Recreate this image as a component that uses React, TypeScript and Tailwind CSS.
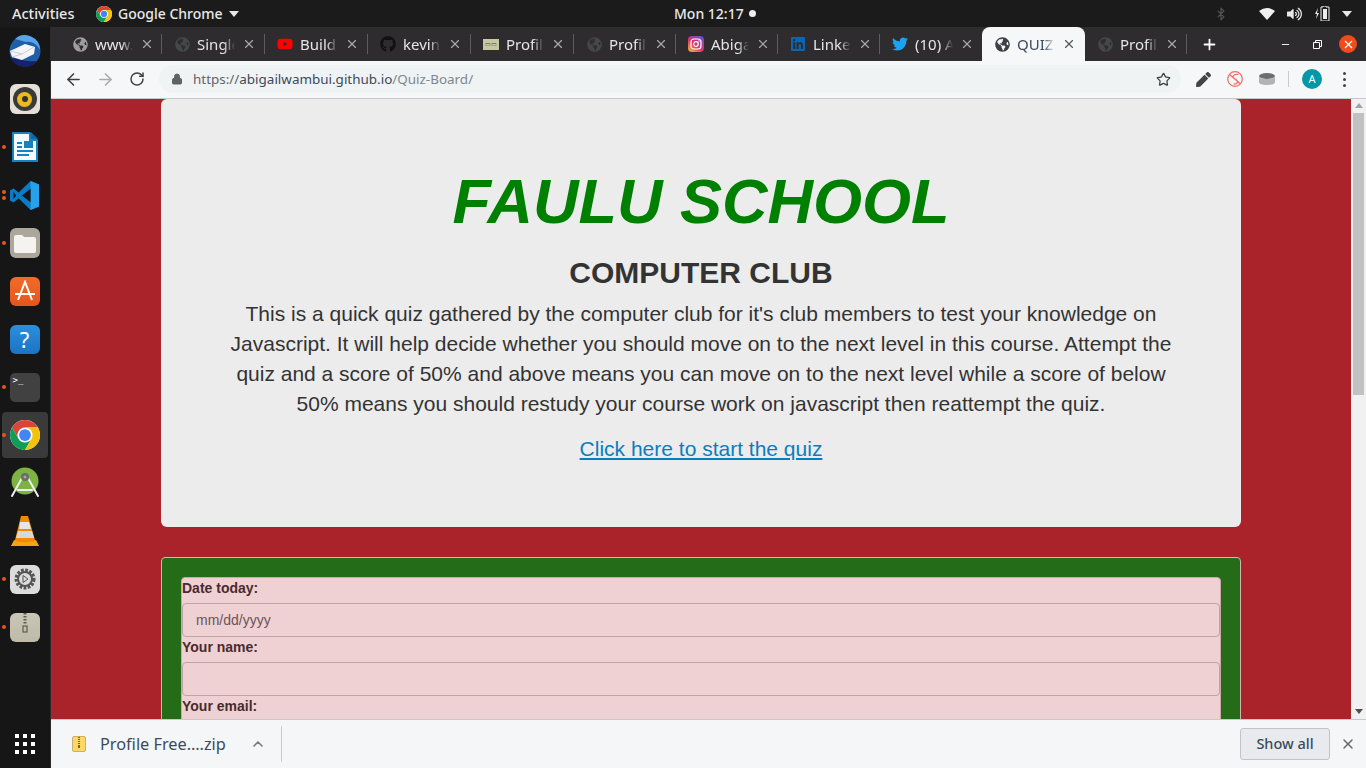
import { ArrowLeft, ArrowRight, Bluetooth, ChevronUp, Lock, Minus, Plus, RotateCw, Star, X } from 'lucide-react';
import { FaGithub, FaGlobeAmericas, FaLinkedin, FaPen, FaTwitter, FaVolumeUp, FaYoutube } from 'react-icons/fa';
import { ReactNode } from 'react';

function ChromeLogo({ size }: { size: number }) {
  return (
    <svg width={size} height={size} viewBox="0 0 24 24">
      <circle cx="12" cy="12" r="12" fill="#fff" />
      <path d="M22.39 6A12 12 0 0 0 1.61 6L6.8 15A6 6 0 0 1 12 6Z" fill="#db4437" />
      <path d="M1.61 6A12 12 0 0 0 12 24L17.2 15A6 6 0 0 1 6.8 15Z" fill="#0f9d58" />
      <path d="M12 24A12 12 0 0 0 22.39 6H12A6 6 0 0 1 17.2 15Z" fill="#f4c20d" />
      <circle cx="12" cy="12" r="4.7" fill="#4285f4" />
    </svg>
  );
}

function Caret({ color = '#e8e8e8' }: { color?: string }) {
  return (
    <svg width="10" height="6" viewBox="0 0 10 6">
      <path d="M0 0h10L5 6z" fill={color} />
    </svg>
  );
}

function TopBar() {
  return (
    <div className="flex h-[27px] items-center bg-[#1b1b1b] text-[14px] font-medium text-[#e8e8e8]">
      <span className="ml-[12px] w-[84px] text-[14.500px]">Activities</span>
      <ChromeLogo size={16} />
      <span className="ml-[6px] w-[106px] whitespace-nowrap">Google Chrome</span>
      <span className="ml-[5px]">
        <Caret />
      </span>
      <span className="ml-[435px] w-[71px] whitespace-nowrap">Mon 12:17</span>
      <span className="ml-[4px] h-[7px] w-[7px] rounded-full bg-[#eeeeee]" />
      <Bluetooth className="ml-[458px] h-[14px] w-[14px] text-[#555555]" />
      <svg className="ml-[31px]" width="16" height="12" viewBox="0 0 16 12">
        <path d="M0 3Q8-3 16 3L8 12z" fill="#f0f0f0" />
      </svg>
      <FaVolumeUp className="ml-[12px] h-[14px] w-[15px] text-[#e8e8e8]" />
      <svg className="ml-[13px]" width="16" height="15" viewBox="0 0 16 15">
        <path d="M3 2 0 8h2l-1 5 3-6H2z" fill="#eee" />
        <path d="M8 0h3v1h3v14H6V1h2z" fill="none" stroke="#eee" strokeWidth="1" />
        <rect x="8" y="3" width="4" height="10" fill="#eee" />
      </svg>
      <span className="ml-[11px]">
        <Caret />
      </span>
    </div>
  );
}

function DockItem({ children, dots = 0, active = false }: { children: ReactNode; dots?: number; active?: boolean }) {
  return (
    <div className="relative flex h-[48px] w-[51px] items-center justify-center">
      {active && <div className="absolute left-[2px] top-[1px] h-[46px] w-[46px] rounded bg-[#3a3a3a]" />}
      {dots > 0 && (
        <div className="absolute left-[2px] top-0 flex h-full flex-col justify-center gap-[2px]">
          {dots > 1 && <span className="h-[4px] w-[4px] rounded-full bg-[#e95420]" />}
          <span className="h-[4px] w-[4px] rounded-full bg-[#e95420]" />
        </div>
      )}
      <div className="relative -ml-[2px] flex h-[32px] w-[32px] items-center justify-center">{children}</div>
    </div>
  );
}

function Dock() {
  return (
    <div className="flex w-[51px] shrink-0 flex-col border-r border-[#2a2a2a] bg-[#161616]">
      <DockItem>
        <svg width="32" height="32" viewBox="0 0 32 32">
          <circle cx="16" cy="16" r="15.500" fill="#1f5fa8" />
          <path d="M6 4a15 15 0 0 1 25 11c-3-6-8-9-14-8z" fill="#5aa3e8" />
          <path d="M2 22a15 15 0 0 0 26 4c-6 1-14 0-26-4z" fill="#16226a" />
          <path d="M1 16 16 9l10 3-1 7-12 6-10-3z" fill="#f5f5f5" />
          <path d="M1 16l12 3 12-7M3 22l10-3" fill="none" stroke="#c9ced6" strokeWidth="1" />
        </svg>
      </DockItem>
      <DockItem>
        <div className="flex h-[30px] w-[30px] items-center justify-center rounded-[6px] bg-[#e4e0d8]">
          <div className="flex h-[24px] w-[24px] items-center justify-center rounded-full bg-[#3a3a38]">
            <div className="flex h-[15px] w-[15px] items-center justify-center rounded-full bg-[#eeb91c]">
              <div className="h-[6px] w-[6px] rounded-full bg-[#33312c]" />
            </div>
          </div>
        </div>
      </DockItem>
      <DockItem dots={1}>
        <svg width="26" height="32" viewBox="0 0 26 32">
          <path d="M0 1h18l8 8v22H0z" fill="#1682c4" />
          <path d="M2 3h15v7h7v19H2z" fill="#f6f9fb" />
          <path d="M19 1l7 7h-7z" fill="#0e69a3" />
          <path d="M5 11h5v2H5zM5 15h5v2H5zM12 10h9v7h-9zM5 19h16v2H5zM5 23h12v2H5z" fill="#1682c4" />
        </svg>
      </DockItem>
      <DockItem dots={2}>
        <svg width="29" height="29" viewBox="0 0 100 100">
          <path d="M71 0 30 40 12 26 0 33v34l12 7 18-14 41 40 29-12V12z" fill="#0a7cc7" />
          <path d="M71 0 100 12v76l-29 12z" fill="#28a1ec" />
          <path d="M71 27v46L41 50z" fill="#161616" />
          <path d="M12 37 21 50l-9 13z" fill="#161616" />
        </svg>
      </DockItem>
      <DockItem dots={1}>
        <div className="flex h-[30px] w-[30px] items-center justify-center rounded-[6px] bg-[#aba79b]">
          <svg width="22" height="19" viewBox="0 0 22 19">
            <path d="M0 3a2 2 0 0 1 2-2h6l2 2h10a2 2 0 0 1 2 2v12a2 2 0 0 1-2 2H2a2 2 0 0 1-2-2z" fill="#f4f3f0" />
          </svg>
        </div>
      </DockItem>
      <DockItem>
        <div className="flex h-[29px] w-[30px] items-center justify-center rounded-[6px] bg-gradient-to-b from-[#f26b2a] to-[#e5551c]">
          <svg width="22" height="22" viewBox="0 0 22 22" fill="none" stroke="#fff" strokeWidth="2">
            <path d="M4 20 11 2l7 18M1 14h20" />
          </svg>
        </div>
      </DockItem>
      <DockItem>
        <div className="flex h-[29px] w-[30px] items-center justify-center rounded-[6px] bg-gradient-to-b from-[#2b8fdc] to-[#1c73c4] text-[22px] leading-none text-white">
          ?
        </div>
      </DockItem>
      <DockItem dots={1}>
        <div className="h-[29px] w-[30px] rounded-[5px] bg-[#414141] pl-[3px] pt-[1px] text-[9px] leading-[12px] text-white [font-family:'DejaVu_Sans_Mono',monospace]">
          &gt;_
        </div>
      </DockItem>
      <DockItem dots={1} active>
        <ChromeLogo size={30} />
      </DockItem>
      <DockItem>
        <svg width="30" height="32" viewBox="0 0 30 32">
          <circle cx="15" cy="14" r="13.500" fill="#7cb342" />
          <path d="M2 29 12 11M28 29 18 11M8 23h14" fill="none" stroke="#eeeeee" strokeWidth="2" strokeLinecap="round" />
          <circle cx="15" cy="10" r="4" fill="#6b6b6b" />
          <circle cx="15" cy="10" r="1.500" fill="#a8a8a8" />
        </svg>
      </DockItem>
      <DockItem>
        <svg width="28" height="30" viewBox="0 0 28 30">
          <path d="M10 0h7l7 24 4 6H0l4-6z" fill="#f08a00" />
          <path d="M9 6h9l2 7H8z" fill="#e6e6e6" />
          <path d="M7 15h14l2 7H5z" fill="#d8d8d8" />
          <path d="M0 30l3-6c6 3 16 3 22 0l3 6z" fill="#f7a410" />
        </svg>
      </DockItem>
      <DockItem dots={1}>
        <div className="flex h-[29px] w-[30px] items-center justify-center rounded-[6px] bg-[#dcdcdc]">
          <svg width="24" height="24" viewBox="0 0 24 24">
            <circle cx="12" cy="12" r="8.500" fill="none" stroke="#555" strokeWidth="4" strokeDasharray="2.600 1.400" />
            <circle cx="12" cy="12" r="7" fill="none" stroke="#555" strokeWidth="2" />
            <path d="M10 8.500 15 12l-5 3.500z" fill="none" stroke="#555" strokeWidth="1" />
          </svg>
        </div>
      </DockItem>
      <DockItem dots={1}>
        <div className="flex h-[29px] w-[30px] justify-center rounded-[6px] bg-gradient-to-b from-[#c9c6b6] to-[#bdbaa9]">
          <svg width="6" height="20" viewBox="0 0 6 20">
            <path d="M3 0v12" stroke="#5e5c52" strokeWidth="3" strokeDasharray="1.500 1.500" />
            <rect x="1" y="13" width="4" height="6" fill="none" stroke="#5e5c52" strokeWidth="1.200" />
          </svg>
        </div>
      </DockItem>
      <div className="mt-auto mb-[14px] ml-[15px] grid w-[20px] grid-cols-3 gap-[4px]">
        {Array.from({ length: 9 }).map((_, i) => (
          <span key={i} className="h-[4px] w-[4px] bg-white" />
        ))}
      </div>
    </div>
  );
}

type TabInfo = { title: string; icon: ReactNode; active?: boolean; noSep?: boolean; wide?: boolean };

const dimGlobe = <FaGlobeAmericas className="h-[15px] w-[15px] text-[#45474a]" />;

function InstagramIcon() {
  return (
    <svg width="16" height="16" viewBox="0 0 16 16">
      <defs>
        <linearGradient id="ig" x1="0.1" y1="1" x2="0.9" y2="0">
          <stop offset="0" stopColor="#fdb135" />
          <stop offset="0.45" stopColor="#e1306c" />
          <stop offset="1" stopColor="#5b51d8" />
        </linearGradient>
      </defs>
      <rect width="16" height="16" rx="4" fill="url(#ig)" />
      <rect x="3" y="3" width="10" height="10" rx="3" fill="none" stroke="#fff" strokeWidth="1.200" />
      <circle cx="8" cy="8" r="2.300" fill="none" stroke="#fff" strokeWidth="1.200" />
      <circle cx="11" cy="5" r="0.700" fill="#fff" />
    </svg>
  );
}

const tabs: TabInfo[] = [
  { title: 'www.', icon: <FaGlobeAmericas className="h-[15px] w-[15px] text-[#9b9da0]" /> },
  { title: 'Single', icon: dimGlobe, wide: true },
  { title: 'Build', icon: <FaYoutube className="h-[16px] w-[16px] text-[#ff0000]" />, wide: true },
  { title: 'kevin-', icon: <FaGithub className="h-[16px] w-[16px] text-[#111111]" />, wide: true },
  {
    title: 'Profil',
    icon: <span className="flex h-[11px] w-[16px] items-center justify-center bg-[#c8c8a0] text-[6px] leading-none text-[#444]">▭▭</span>,
    wide: true,
  },
  { title: 'Profil', icon: dimGlobe },
  { title: 'Abiga', icon: <InstagramIcon /> },
  { title: 'Linke', icon: <FaLinkedin className="h-[16px] w-[16px] text-[#0a66b0]" /> },
  { title: '(10) A', icon: <FaTwitter className="h-[16px] w-[16px] text-[#1da1f2]" />, noSep: true },
  { title: 'QUIZ', icon: <FaGlobeAmericas className="h-[15px] w-[15px] text-[#3c4043]" />, active: true, noSep: true, wide: true },
  { title: 'Profil', icon: dimGlobe },
];

function Tab({ tab }: { tab: TabInfo }) {
  return (
    <div
      className={`relative flex h-[34px] shrink-0 items-center pl-[12px] ${tab.wide ? 'w-[103px]' : 'w-[102px]'} ${
        tab.active ? 'rounded-t-[8px] bg-[#f6f7f9] text-[#3c4a5c]' : 'text-[#e4e5e7]'
      }`}
    >
      <span className="flex w-[16px] justify-center">{tab.icon}</span>
      <span className="ml-[7px] w-[38px] overflow-hidden whitespace-nowrap [mask-image:linear-gradient(to_right,black_70%,transparent)]">
        {tab.title}
      </span>
      <X className={`ml-[7px] h-[14px] w-[14px] ${tab.active ? 'text-[#55585c]' : 'text-[#a8aaad]'}`} strokeWidth={2} />
      {!tab.noSep && <span className="absolute right-0 top-[7px] h-[20px] w-px bg-[#5c5d60]" />}
    </div>
  );
}

function TabStrip() {
  return (
    <div className="flex h-[34px] items-center bg-[#2e2c2e] pl-[9px] text-[15px]">
      {tabs.map((tab, i) => (
        <Tab key={i} tab={tab} />
      ))}
      <Plus className="ml-[14px] h-[17px] w-[17px] text-white" strokeWidth={2.500} />
      <Minus className="ml-[62px] h-[11px] w-[11px] text-white" />
      <svg className="ml-[22px]" width="9" height="9" viewBox="0 0 9 9" fill="none" stroke="#fff">
        <path d="M.5 2.500h6v6h-6zM2.500 2.500v-2h6v6h-2" />
      </svg>
      <span className="ml-[17px] flex h-[18px] w-[18px] items-center justify-center rounded-full bg-[#ee4c1c]">
        <X className="h-[13px] w-[13px] text-white" strokeWidth={2} />
      </span>
    </div>
  );
}

function Toolbar() {
  return (
    <div className="flex h-[38px] items-center border-b border-[#c3c9cf] bg-[#f6f7f9] pb-[1px] text-[#3c4043]">
      <ArrowLeft className="ml-[13px] h-[19px] w-[19px]" strokeWidth={2} />
      <ArrowRight className="ml-[13px] h-[19px] w-[19px] text-[#a8aaad]" strokeWidth={2} />
      <RotateCw className="ml-[14px] h-[16px] w-[16px]" strokeWidth={2.200} />
      <div className="ml-[14px] flex h-[28px] w-[1022px] items-center rounded-full bg-[#f0f3f4] pl-[12px]">
        <Lock className="h-[12px] w-[12px] fill-[#5f6368] text-[#5f6368]" />
        <span className="ml-[10px] text-[13.450px] text-[#3c4a5c]">
          <span className="text-[#5f6368]">https://</span>abigailwambui.github.io<span className="text-[#80868b]">/Quiz-Board/</span>
        </span>
        <Star className="ml-auto mr-[10px] h-[15px] w-[15px] text-[#3c4043]" strokeWidth={2} />
      </div>
      <FaPen className="ml-[15px] h-[15px] w-[15px] text-[#444444]" />
      <svg className="ml-[16px]" width="16" height="16" viewBox="0 0 16 16" fill="none" stroke="#f26a60" strokeWidth="1.200">
        <circle cx="8" cy="8" r="7.300" />
        <path d="M2.500 3.500 13 12.500M11.500 3.500C6 2.500 4.500 6.500 8 8s3.500 5.500-1.500 5" />
      </svg>
      <svg className="ml-[16px]" width="16" height="12" viewBox="0 0 16 12">
        <ellipse cx="8" cy="3" rx="8" ry="3" fill="#6d6d6d" />
        <path d="M0 3v6c0 2 3 3 8 3s8-1 8-3V3c0 2-3 3-8 3S0 5 0 3z" fill="#b3b3b3" />
      </svg>
      <span className="ml-[13px] h-[16px] w-px bg-[#c9cccf]" />
      <span className="ml-[13px] flex h-[20px] w-[20px] items-center justify-center rounded-full bg-[#0097a7] text-[11px] text-white">A</span>
      <div className="ml-[21px] flex flex-col gap-[3px]">
        <span className="h-[3px] w-[3px] rounded-full bg-[#444444]" />
        <span className="h-[3px] w-[3px] rounded-full bg-[#444444]" />
        <span className="h-[3px] w-[3px] rounded-full bg-[#444444]" />
      </div>
    </div>
  );
}

function Field({ label, placeholder }: { label: string; placeholder?: string }) {
  return (
    <div>
      <div className="text-[14px] font-bold leading-[21px] text-[#4b2a2f]">{label}</div>
      <div className="mt-[4px] flex h-[34px] items-center rounded-[4px] border border-[#c1a2a6] pl-[13px] text-[14px] text-[#6c5458]">
        {placeholder}
      </div>
    </div>
  );
}

function Page() {
  return (
    <div className="flex min-h-0 flex-1">
      <div className="min-w-0 flex-1 overflow-hidden bg-[#aa232b] [font-family:'Liberation_Sans',Arial,sans-serif]">
        <div className="mx-[110px] w-[1080px]">
          <div className="h-[428px] rounded-[6px] bg-[#ececec] pt-[64px] text-center">
            <h1 className="text-[63px] font-bold italic leading-[77px] text-[#008000]">FAULU SCHOOL</h1>
            <h3 className="mt-[15px] text-[30px] font-bold leading-[36px] text-[#333333]">COMPUTER CLUB</h3>
            <p className="mx-auto mt-[8px] w-[960px] text-[21px] leading-[30px] text-[#333333]">
              This is a quick quiz gathered by the computer club for it's club members to test your knowledge on Javascript. It will help decide whether you should move on to the next level in this course. Attempt the quiz and a score of 50% and above means you can move on to the next level while a score of below 50% means you should restudy your course work on javascript then reattempt the quiz.
            </p>
            <a className="mt-[15px] block text-[21px] leading-[30px] text-[#0a7ebd] underline">Click here to start the quiz</a>
          </div>
          <div className="mt-[30px] rounded-[4px] border border-[#c9b9b0] bg-[#246c18] px-[19px] pt-[19px]">
            <div className="flex flex-col rounded-[4px] border border-[#c9a9ac] bg-[#efd1d3] pb-[20px]">
              <Field label="Date today:" placeholder="mm/dd/yyyy" />
              <Field label="Your name:" />
              <Field label="Your email:" />
            </div>
          </div>
        </div>
      </div>
      <div className="flex w-[15px] shrink-0 flex-col items-center bg-[#f1f1f1]">
        <svg className="mt-[4px]" width="8" height="5" viewBox="0 0 8 5">
          <path d="M4 0l4 5H0z" fill="#a3a3a3" />
        </svg>
        <div className="mt-[5px] h-[282px] w-[11px] bg-[#c1c1c1]" />
        <svg className="mb-[5px] mt-auto" width="8" height="5" viewBox="0 0 8 5">
          <path d="M0 0h8L4 5z" fill="#505050" />
        </svg>
      </div>
    </div>
  );
}

function DownloadBar() {
  return (
    <div className="flex h-[49px] shrink-0 items-center border-t border-[#c3c9cf] bg-[#f5f6f8]">
      <svg className="ml-[21px]" width="14" height="16" viewBox="0 0 14 16">
        <rect x="0.500" y="0.500" width="13" height="15" rx="1.500" fill="#fdd663" stroke="#c9b06a" />
        <path d="M7 1v7" stroke="#7a6420" strokeWidth="2" strokeDasharray="1 1" />
        <rect x="6" y="9" width="2" height="3" fill="#7a6420" />
      </svg>
      <span className="ml-[14px] w-[141px] whitespace-nowrap text-[16.300px] text-[#3c4a5c]">Profile Free….zip</span>
      <ChevronUp className="ml-[9px] h-[16px] w-[16px] text-[#7a7d80]" strokeWidth={2.500} />
      <span className="ml-[15px] h-[36px] w-px bg-[#c9cccf]" />
      <span className="ml-auto flex h-[32px] w-[90px] items-center justify-center rounded-[3px] border border-[#bfc4ca] bg-[#e8eaed] text-[14.500px] font-medium text-[#3c4a5c]">
        Show all
      </span>
      <X className="ml-[10px] mr-[10px] h-[16px] w-[16px] text-[#666666]" strokeWidth={2.200} />
    </div>
  );
}

export default function App() {
  return (
    <div className="flex h-[768px] w-[1366px] flex-col overflow-hidden bg-[#161616] [font-family:'Noto_Sans',sans-serif]">
      <TopBar />
      <div className="flex min-h-0 flex-1">
        <Dock />
        <div className="flex min-w-0 flex-1 flex-col">
          <TabStrip />
          <Toolbar />
          <Page />
          <DownloadBar />
        </div>
      </div>
    </div>
  );
}
